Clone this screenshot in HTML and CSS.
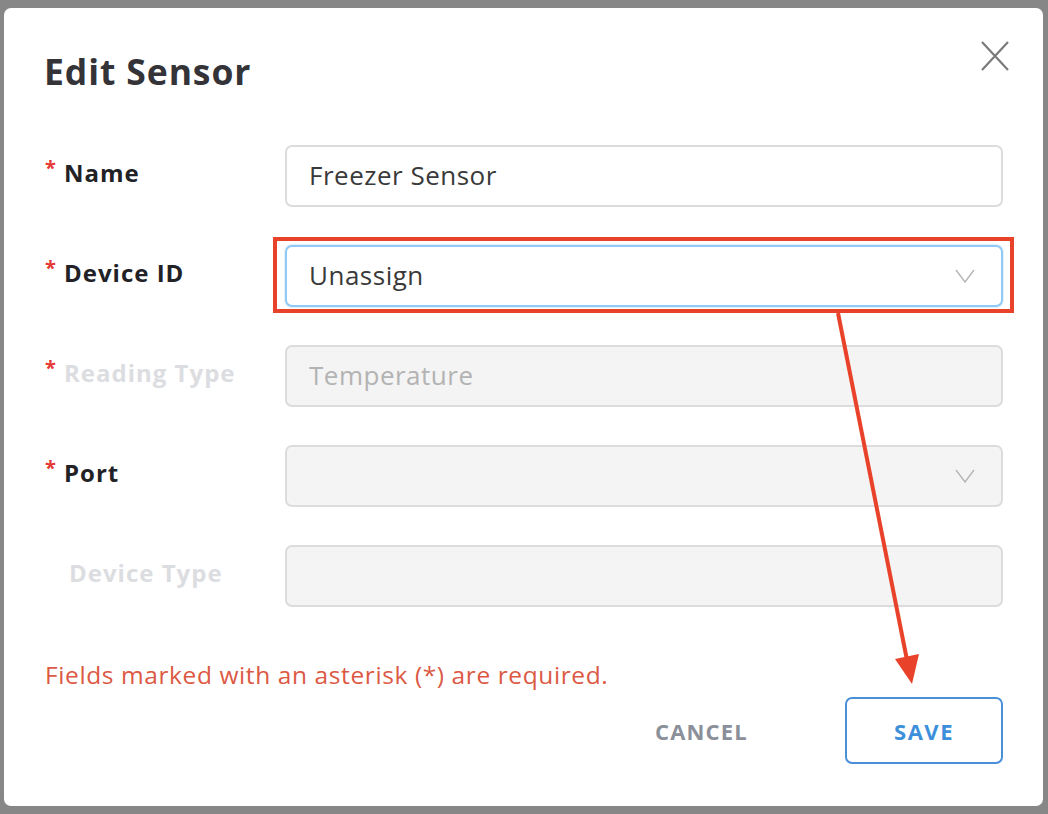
FILE: index.html
```html
<!DOCTYPE html>
<html lang="en">
<head>
<meta charset="utf-8">
<title>Edit Sensor</title>
<link rel="stylesheet" href="styles.css">
</head>
<body>
<div class="backdrop">
  <div class="modal">
    <div class="modal-header">
      <h1 class="title">Edit Sensor</h1>
      <button class="close" aria-label="Close">
        <svg width="30" height="32" viewBox="0 0 30 32"><path d="M2 2 L28 30 M28 2 L2 30" stroke="#7a7a7a" stroke-width="2.2" fill="none"/></svg>
      </button>
    </div>

    <div class="form">
      <div class="row">
        <label class="label"><span class="req">*</span>Name</label>
        <div class="field"><div class="input">Freezer Sensor</div></div>
      </div>
      <div class="row">
        <label class="label"><span class="req">*</span>Device ID</label>
        <div class="field annotated">
          <div class="input focus">Unassign<svg class="chev" width="20" height="14" viewBox="0 0 20 14"><path d="M1 1 L10 13 L19 1" stroke="#b5b5b5" stroke-width="1.4" fill="none"/></svg></div>
          <div class="redbox"></div>
        </div>
      </div>
      <div class="row">
        <label class="label disabled"><span class="req">*</span>Reading Type</label>
        <div class="field"><div class="input disabled-input">Temperature</div></div>
      </div>
      <div class="row">
        <label class="label"><span class="req">*</span>Port</label>
        <div class="field"><div class="input disabled-input"><span></span><svg class="chev" width="20" height="14" viewBox="0 0 20 14"><path d="M1 1 L10 13 L19 1" stroke="#b5b5b5" stroke-width="1.4" fill="none"/></svg></div></div>
      </div>
      <div class="row">
        <label class="label disabled no-req">Device Type</label>
        <div class="field"><div class="input disabled-input"></div></div>
      </div>
    </div>

    <p class="required-note">Fields marked with an asterisk (*) are required.</p>

    <div class="actions">
      <button class="btn-cancel">CANCEL</button>
      <button class="btn-save">SAVE</button>
    </div>
  </div>
</div>
<svg class="arrow" width="1048" height="814" viewBox="0 0 1048 814">
  <line x1="838" y1="313" x2="907" y2="660" stroke="#e8432a" stroke-width="4"/>
  <polygon points="895,659 919,654 912,684" fill="#e8432a"/>
</svg>
</body>
</html>
```

FILE: styles.css
```css
html, body {
  margin: 0;
  padding: 0;
}
body {
  background: #878787;
  font-family: "Open Sans", "Liberation Sans", sans-serif;
  width: 1048px;
  height: 814px;
  overflow: hidden;
  position: relative;
}
.backdrop {
  padding: 8px 5px 8px 4px;
  height: 798px;
}
.modal {
  background: #ffffff;
  border-radius: 7px;
  height: 798px;
  box-sizing: border-box;
  padding: 0 40px 0 41px;
  display: flex;
  flex-direction: column;
}
.modal-header {
  display: flex;
  justify-content: space-between;
  align-items: flex-start;
  height: 137px;
}
.title {
  margin: 41px 0 0 -1px;
  font-size: 35.5px;
  line-height: 44px;
  font-weight: 700;
  color: #333338;
  letter-spacing: 0.9px;
}
.close {
  margin: 32px -7px 0 0;
  padding: 0;
  border: 0;
  background: none;
  width: 30px;
  height: 32px;
}
.form {
  display: flex;
  flex-direction: column;
  gap: 38px;
}
.row {
  display: grid;
  grid-template-columns: 240px 1fr;
  align-items: center;
  height: 62px;
}
.label {
  font-size: 24px;
  font-weight: 700;
  color: #222226;
  display: flex;
  align-items: flex-start;
  line-height: 30px;
  letter-spacing: 1px;
  margin-top: -6px;
}
.label.disabled {
  color: #dcdde1;
}
.label.no-req {
  padding-left: 24px;
}
.req {
  color: #e53935;
  font-size: 20px;
  line-height: 20px;
  width: 19px;
  flex: none;
  letter-spacing: 0;
}
.field {
  position: relative;
  height: 62px;
}
.input {
  box-sizing: border-box;
  height: 62px;
  border: 2px solid #dcdcdc;
  border-radius: 7px;
  padding: 0 26px 3px 22px;
  display: flex;
  align-items: center;
  justify-content: space-between;
  font-size: 26px;
  letter-spacing: 0.5px;
  color: #3a3a3a;
  background: #fff;
}
.input.focus {
  border-color: #8fcbf6;
  box-shadow: 0 0 0 1px #e3f0fb;
}
.disabled-input {
  background: #f4f4f4;
  color: #b3b3b3;
}
.chev {
  flex: none;
  margin-top: 3px;
}
.redbox {
  position: absolute;
  left: -12px;
  right: -11px;
  top: -8px;
  bottom: -6px;
  border: 4px solid #e8432a;
  box-sizing: border-box;
  pointer-events: none;
}
.required-note {
  margin: 50px 0 0 0;
  font-size: 24.5px;
  line-height: 36px;
  letter-spacing: 0.6px;
  color: #dc5944;
}
.actions {
  display: flex;
  justify-content: flex-end;
  align-items: center;
  margin-top: 4px;
}
.btn-cancel {
  border: 0;
  background: none;
  font-family: inherit;
  font-size: 22px;
  font-weight: 700;
  color: #8a8f99;
  letter-spacing: 1.2px;
  padding: 0;
  margin-right: 97px;
}
.btn-save {
  box-sizing: border-box;
  width: 158px;
  height: 67px;
  border: 2px solid #4a90d9;
  border-radius: 7px;
  background: #fff;
  font-family: inherit;
  font-size: 22px;
  font-weight: 700;
  color: #3d8fdc;
  letter-spacing: 1.5px;
  padding: 0;
}
.arrow {
  position: absolute;
  left: 0;
  top: 0;
  pointer-events: none;
}
```
